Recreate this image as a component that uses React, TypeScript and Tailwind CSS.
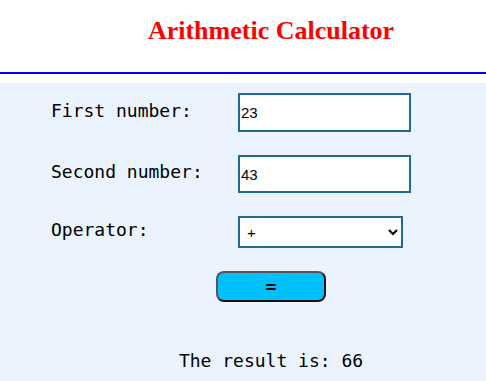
import { useState } from "react";

export default function App() {
  const [first, setFirst] = useState("23");
  const [second, setSecond] = useState("43");
  const [op, setOp] = useState("+");

  const a = parseFloat(first);
  const b = parseFloat(second);
  let result = 0;
  if (op === "+") result = a + b;
  else if (op === "-") result = a - b;
  else if (op === "*") result = a * b;
  else if (op === "/") result = a / b;

  const labelCls =
    "w-[187px] pb-[5px] text-[18px] text-black font-['DejaVu_Sans_Mono',monospace]";
  const inputCls =
    "w-[173px] bg-white border-2 border-[#1f6a9a] px-[1px] text-[15px] text-black font-['Liberation_Sans',Arial,sans-serif] outline-none";

  return (
    <div className="w-[486px] h-[381px] bg-white">
      <header className="h-[74px] border-b-2 border-[#0000ff] pt-[15px] pl-[56px] text-center">
        <h1 className="text-[26px] leading-[32px] font-bold text-[#ff0000] font-['Liberation_Serif','Times_New_Roman',serif]">
          Arithmetic Calculator
        </h1>
      </header>
      <main className="mt-[9px] h-[298px] bg-[#eaf3fe] pt-[10px]">
        <div className="flex items-center pl-[51px]">
          <label className={labelCls}>First number:</label>
          <input
            type="text"
            value={first}
            onChange={(e) => setFirst(e.target.value)}
            className={inputCls + " h-[39px]"}
          />
        </div>
        <div className="flex items-center pl-[51px] mt-[23px]">
          <label className={labelCls}>Second number:</label>
          <input
            type="text"
            value={second}
            onChange={(e) => setSecond(e.target.value)}
            className={inputCls + " h-[38px]"}
          />
        </div>
        <div className="flex items-center pl-[51px] mt-[23px]">
          <label className={labelCls}>Operator:</label>
          <select
            value={op}
            onChange={(e) => setOp(e.target.value)}
            className="w-[165px] h-[32px] bg-white border-2 border-[#1f6a9a] pl-[3px] pr-[6px] text-[15px] text-black font-['Liberation_Sans',Arial,sans-serif] outline-none appearance-auto"
          >
            <option value="+">+</option>
            <option value="-">-</option>
            <option value="*">*</option>
            <option value="/">/</option>
          </select>
        </div>
        <div className="flex justify-center pl-[56px] mt-[23px]">
          <button className="w-[110px] h-[31px] rounded-[8px] bg-[#00bfff] border-2 border-t-[#555555] border-l-[#555555] border-b-[#111111] border-r-[#111111] text-[18px] font-bold text-black font-['DejaVu_Sans_Mono',monospace]">
            =
          </button>
        </div>
        <p className="mt-[45px] pl-[56px] text-center text-[18px] text-black font-['DejaVu_Sans_Mono',monospace]">
          The result is: {result}
        </p>
      </main>
    </div>
  );
}
